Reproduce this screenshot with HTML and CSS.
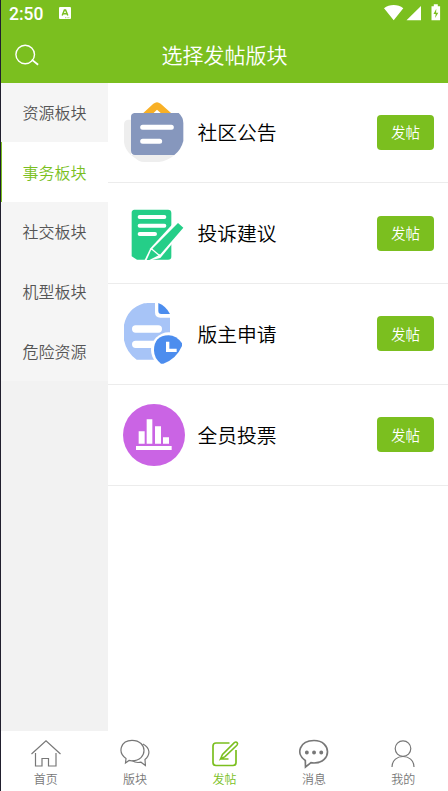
FILE: index.html
```html
<!DOCTYPE html>
<html lang="zh-CN">
<head>
<meta charset="utf-8">
<title>选择发帖版块</title>
<link rel="stylesheet" href="styles.css">
</head>
<body>
<div class="app">
  <header class="header">
    <div class="status">
      <span class="clock">2:50</span>
      <svg class="app-badge" viewBox="0 0 12 12"><rect width="12" height="12" rx="1" fill="#fff"/><path d="M3.200 8.500 5.400 3h1.200L8.800 8.500M4.300 6.800h3.400" fill="none" stroke="#7bbf1f" stroke-width="1.500"/><path d="M6 10.700h5" stroke="#7bbf1f" stroke-width=".6" stroke-dasharray="1 .6"/></svg>
      <svg class="signals" viewBox="0 0 60 18"><path d="M0 4.200C5.500-.2 14-.2 19.300 4.200L9.700 16.300ZM37 2v14.300H22.500ZM47.500 2.300h2.300V.3h4v2h2.300v14h-8.600Z" fill="#fff"/><path d="M52.300 4.800 49.500 10h2.200l-.6 4 3.200-5.300h-2.200Z" fill="#7bbf1f"/></svg>
    </div>
    <div class="titlebar">
      <svg class="search" viewBox="0 0 24 22" fill="none" stroke="#fff" stroke-width="1.400"><circle cx="10.200" cy="10.500" r="9.300"/><path d="m16.800 15.600 6.300 5.200" stroke-width="1.800"/></svg>
      <h1>选择发帖版块</h1>
    </div>
  </header>
  <main class="content">
    <nav class="side">
      <a>资源板块</a>
      <a class="active">事务板块</a>
      <a>社交板块</a>
      <a>机型板块</a>
      <a>危险资源</a>
    </nav>
    <section class="boards">
      <article>
        <svg class="icon" viewBox="45 33 186 186"><path d="M69 89H60Q48 91 48 104V157Q51 179 68 194L92 212Q100 216 110 216H153Q177 213 200 195H69Z" fill="#eee"/><path d="M105 70 136 41Q147 32 158 41L190 70H159L147 59 136 70Z" fill="#f8b026"/><path d="M79 69H212Q226 82 226 99V153Q219 180 199 195H81Q69 194 69 182V80Q69 71 79 69Z" fill="#8697bd"/><path d="M104 112h86M104 154h51" stroke="#fff" stroke-width="15" stroke-linecap="round"/></svg>
        <h2>社区公告</h2><button>发帖</button>
      </article>
      <article>
        <svg class="icon" viewBox="45 36 186 186"><path d="M79 59H180Q190 59 190 69V200Q190 209 180 209H87L71 199V68Q71 60 79 59Z" fill="#25ce88"/><path d="M95 81h74M95 107h74M95 132h46" stroke="#fff" stroke-width="12" stroke-linecap="round"/><path d="M203 92 231 115 157 204 118 214H108L127 175Z" fill="#fff"/><path d="m210 99 16 14-70 81-23-18ZM129 181l8-4 16 13-1 6-28 14H116Z" fill="#25ce88"/><path d="m131 177 24 20" stroke="#fff" stroke-width="4"/></svg>
        <h2>投诉建议</h2><button>发帖</button>
      </article>
      <article>
        <svg class="icon" viewBox="45 39 186 186"><path d="M141 39V67Q141 83 157 83H186V209H86Q56 189 48 151V105Q58 55 108 40Q124 38 141 39Z" fill="#a7c4f7"/><path d="M151 39Q174 48 186 72H160Q151 72 151 63Z" fill="#4c8dee"/><path d="M83 117h68M83 163h60" stroke="#fff" stroke-width="22" stroke-linecap="round"/><circle cx="182" cy="180" r="53" fill="#fff"/><path d="M182 136Q205 136 222 160V168Q205 207 166 221H159Q138 205 138 181Q138 137 182 136Z" fill="#4c8dee"/><path d="M179 155v26h27" fill="none" stroke="#fff" stroke-width="10"/></svg>
        <h2>版主申请</h2><button>发帖</button>
      </article>
      <article>
        <svg class="icon" viewBox="45 41 186 186"><circle cx="138" cy="134" r="93" fill="#ca64e4"/><path d="M92 123h18v37H92zM116 87h17v73h-17zM141 108h18v52h-18zM165 141h18v19h-18zM84 167h107v12H84z" fill="#fff"/></svg>
        <h2>全员投票</h2><button>发帖</button>
      </article>
    </section>
  </main>
  <footer class="tabs">
    <a><svg viewBox="0 0 32 30"><path d="M1.500 15 16 1.800 30.500 15M5.500 14v13h6.500v-7.500h6.500V27H26V14"/></svg><span>首页</span></a>
    <a><svg viewBox="0 0 32 30"><path d="M7 19.500C-2 13 2 1.300 13 1.300c16 0 16 20.500 0 20.500q-2 0-3-.4L6.500 24Z"/><path d="M24 5c7.500 4 7.500 11 2 15.500l.4 6-4.400-3.300q-5.500 1-8.500-1.400"/></svg><span>版块</span></a>
    <a class="active"><svg viewBox="0 0 32 30"><path d="M20.500 4H7Q4 4 4 7v16.500q0 3 3 3h17q3 0 3-3V11" stroke-width="1.700"/><path d="m11.500 20 2-4.500L25.300 3.600q1.700-1.200 2.800 0t-.2 2.700L16 17.700Zm0 0h8" stroke-width="1.600"/></svg><span>发帖</span></a>
    <a><svg viewBox="0 0 32 30"><path d="M7.300 21.500C-3 14.500 2 1.500 16 1.500c18 0 18 22.500 0 22.500l-3-.3L7.500 28Z" stroke-width="1.700"/><path d="M8.800 13.500h.1M16 13.500h.1M23.200 13.500h.1" stroke-width="3.800" stroke-linecap="round"/></svg><span>消息</span></a>
    <a><svg viewBox="0 0 32 30"><circle cx="16" cy="9.600" r="7.800"/><path d="M5 28c0-14 22-14 22 0"/></svg><span>我的</span></a>
  </footer>
</div>
</body>
</html>
```

FILE: styles.css
```css
* { box-sizing: border-box; }
body {
  margin: 0;
  background: #fff;
  font-family: Roboto, "Noto Sans CJK SC", sans-serif;
}
.app {
  height: 791px;
  border-left: 1px solid #211f2e;
  display: flex;
  flex-direction: column;
  overflow: hidden;
}
.header {
  height: 82.500px;
  flex: none;
  background: #7bbf1f;
  color: #fff;
}
.status {
  height: 27px;
  display: flex;
  align-items: center;
  padding: 0 7px 0 8px;
}
.clock { font-size: 17.500px; font-weight: 500; width: 50px; }
.app-badge { width: 12px; height: 12px; margin-top: -1px; }
.signals { width: 60px; height: 18px; margin: -1px -3px 0 auto; }
.titlebar {
  height: 55px;
  display: grid;
  grid-template-columns: 38px 1fr 38px;
  align-items: center;
}
.search { width: 24px; height: 22px; margin-left: 14px; }
h1 {
  margin: 0;
  padding-bottom: 2px;
  font: 350 21px/30px "Noto Sans CJK SC", sans-serif;
  text-align: center;
}
.content { flex: 1; display: flex; min-height: 0; }
.side { width: 107px; background: #f2f2f2; }
.side a {
  display: flex;
  align-items: center;
  justify-content: center;
  height: 59.700px;
  padding-bottom: 1px;
  background: #f5f5f5;
  color: #555;
  font-size: 16px;
  font-weight: 350;
}
.side .active { background: #fff; color: #7bbf1f; box-shadow: inset 1px 0 #7bbf1f; }
.boards { flex: 1; }
article {
  height: 100.800px;
  display: flex;
  align-items: center;
  border-bottom: 1px solid #ececec;
  padding: 0 14px 0 15px;
}
.icon { width: 62px; height: 62px; flex: none; }
h2 { margin: 0 auto 0 12.500px; padding-top: 4px; font-size: 19.800px; font-weight: 350; line-height: 28px; color: #000; }
button {
  width: 57px;
  height: 35px;
  padding: 0 0 1px;
  border: 0;
  border-radius: 4px;
  background: #7bbf1f;
  color: #fff;
  font: 350 14.500px "Noto Sans CJK SC", sans-serif;
}
.tabs { height: 60px; flex: none; display: flex; background: #fff; }
.tabs a {
  flex: 1;
  display: flex;
  flex-direction: column;
  align-items: center;
  padding-top: 8px;
  color: #777;
  font-size: 12px;
  font-weight: 350;
  line-height: 22px;
}
.tabs svg { width: 32px; height: 30px; flex: none; fill: none; stroke: currentColor; stroke-width: 1.200; }
.tabs .active { color: #7bbf1f; }
```
